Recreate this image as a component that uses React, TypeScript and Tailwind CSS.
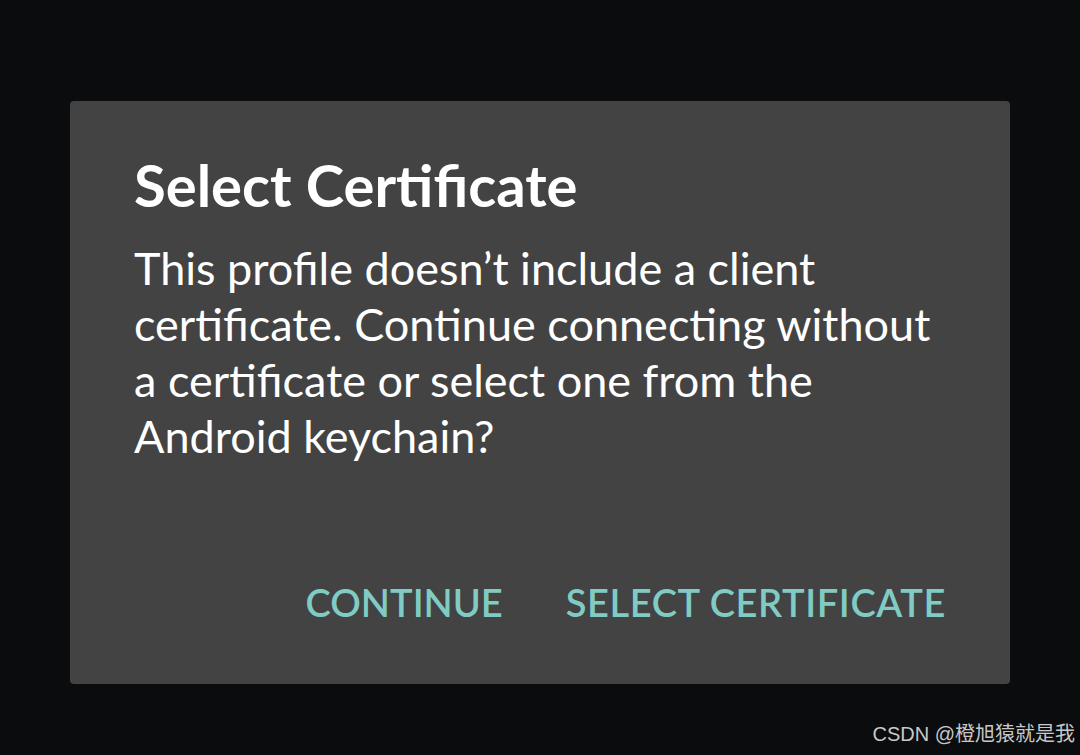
export default function App() {
  return (
    <div
      className="w-[1080px] h-[755px] bg-[#0b0c0e] flex flex-col overflow-hidden"
      style={{ fontFamily: 'Lato, "Noto Sans", sans-serif' }}
    >
      <div className="ml-[70px] mt-[101px] w-[940px] h-[583px] bg-[#434343] rounded-[4px] flex flex-col">
        <div className="px-[64px] pt-[52px]">
          <h1 className="text-[58px] font-bold text-white leading-[64px] whitespace-nowrap">
            Select Certificate
          </h1>
          <p className="mt-[23px] text-[45px] text-white leading-[56px] whitespace-nowrap">
            This profile doesn’t include a client
            <br />
            certificate. Continue connecting without
            <br />
            a certificate or select one from the
            <br />
            Android keychain?
          </p>
        </div>
        <div className="mt-auto mb-[58px] flex justify-end gap-[63px] pr-[64px]">
          <button className="text-[38px] font-semibold text-[#80cbc4] leading-[48px]">CONTINUE</button>
          <button className="text-[38px] font-semibold text-[#80cbc4] leading-[48px] tracking-[0.6px]">
            SELECT CERTIFICATE
          </button>
        </div>
      </div>
      <div
        className="mt-auto mb-[6px] mr-[5px] self-end text-[20px] text-[#c8c8c8]"
        style={{ fontFamily: '"Liberation Sans", "Noto Sans CJK SC", sans-serif' }}
      >
        CSDN @橙旭猿就是我
      </div>
    </div>
  );
}
